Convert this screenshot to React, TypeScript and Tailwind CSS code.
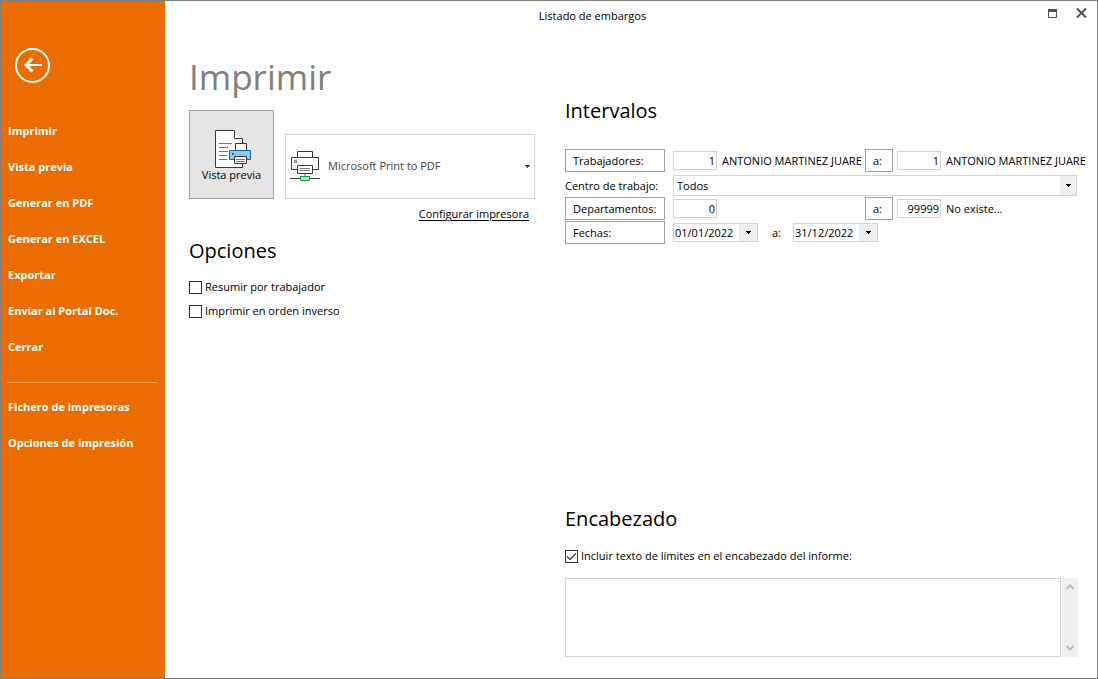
import React, { useState } from 'react';

const mainActions = [
  'Imprimir',
  'Vista previa',
  'Generar en PDF',
  'Generar en EXCEL',
  'Exportar',
  'Enviar al Portal Doc.',
  'Cerrar',
];

const setupActions = ['Fichero de impresoras', 'Opciones de impresión'];

function BackIcon() {
  return (
    <svg width="36" height="36" viewBox="0 0 36 36" fill="none" stroke="white">
      <circle cx="17.5" cy="17.5" r="16.5" strokeWidth="2" />
      <path d="M10.5 17H27" strokeWidth="2" />
      <path d="M17.5 10.5L11 17L17.5 23.5" strokeWidth="3" />
    </svg>
  );
}

function PreviewIcon() {
  return (
    <svg width="38" height="40" viewBox="-1 0 38 40" fill="none">
      <path d="M1.5 1.5H20L28.5 10V38.5H1.5Z" fill="white" stroke="#3a3a3a" />
      <path d="M20.5 1.5V9.5H28.5" fill="white" stroke="#3a3a3a" />
      <path d="M5 14.5H18M5 18.5H14M5 22.5H14M5 26.5H13M5 30.5H13" stroke="#777777" />
      <path d="M21.5 21V14.5H32.5V21" fill="white" stroke="#3a3a3a" />
      <path d="M15.5 21.5H36.5V30.5H15.5Z" fill="#91c8f0" stroke="#1269b3" />
      <path d="M18 24H20V26H18Z" fill="#1269b3" />
      <path d="M20.5 27.5H32.5V34.5H20.5Z" fill="white" stroke="#3a3a3a" />
      <path d="M22 30.5H31M22 32.5H31" stroke="#777777" />
    </svg>
  );
}

function PrinterIcon() {
  return (
    <svg width="31" height="32" viewBox="0 0 31 32" fill="none" className="shrink-0">
      <path d="M7.5 7.5V1.5H22.5V7.5" stroke="#3a3a3a" />
      <path d="M7 19.5H1.5V7.5H28.5V19.5H23" stroke="#3a3a3a" />
      <path d="M4.5 10.5H6.5V12.5H4.5Z" stroke="#777777" />
      <path d="M7.5 15.5H22.5V23.5H7.5Z" fill="white" stroke="#3a3a3a" />
      <path d="M10 18.5H20M10 20.5H20" stroke="#777777" />
      <path d="M15 24V26" stroke="#b0b0b0" strokeWidth="2" />
      <path d="M0 28.5H30" stroke="#3a3a3a" />
      <path d="M10.5 26.5H19.5V30.5H10.5Z" fill="#b9e0c4" stroke="#149845" />
    </svg>
  );
}

function Arrow() {
  return (
    <svg width="5" height="3" viewBox="0 0 5 3" fill="currentColor" shapeRendering="crispEdges">
      <path d="M0 0H5V1H4V2H3V3H2V2H1V1H0Z" />
    </svg>
  );
}

function Check({ label, defaultChecked = false }: { label: string; defaultChecked?: boolean }) {
  const [checked, setChecked] = useState(defaultChecked);
  return (
    <label className="flex h-6 items-center gap-[3px]">
      <span className="relative h-[13px] w-[13px]">
        <input
          type="checkbox"
          checked={checked}
          onChange={(e) => setChecked(e.target.checked)}
          className="block h-[13px] w-[13px] appearance-none border border-[#333333] bg-white"
        />
        {checked && (
          <svg width="13" height="13" viewBox="0 0 13 13" fill="none" className="pointer-events-none absolute inset-0">
            <path d="M2 6.5L5 9.5L11 3.5" stroke="#333333" strokeWidth="1.2" />
          </svg>
        )}
      </span>
      {label}
    </label>
  );
}

function RangeButton({ children, wide = false }: { children: React.ReactNode; wide?: boolean }) {
  return (
    <button className={`h-[23px] shrink-0 border border-[#a0a0a0] bg-white px-[7px] text-left ${wide ? 'w-[100px]' : 'w-7'}`}>
      {children}
    </button>
  );
}

function CodeInput({ label, value }: { label: string; value: string }) {
  return (
    <input
      aria-label={label}
      defaultValue={value}
      className="h-[19px] w-11 shrink-0 border border-[#d4d4d4] bg-white px-px text-right"
    />
  );
}

function DateInput({ label, value }: { label: string; value: string }) {
  return (
    <div className="flex h-[19px] w-[85px] border border-[#d4d4d4]">
      <input aria-label={label} defaultValue={value} className="w-16 min-w-0 flex-1 pl-px" />
      <button aria-label="Abrir calendario" className="flex w-[18px] items-center justify-center bg-[#efefef]">
        <Arrow />
      </button>
    </div>
  );
}

export default function App() {
  return (
    <div className="flex min-h-screen border border-[#7f7f7f] bg-white font-['Open_Sans','Noto_Sans',sans-serif] text-[11px] leading-4 text-black">

      {/* SIDEBAR */}
      <nav className="w-[164px] shrink-0 bg-[#eb6c00] px-[6px] pt-[47px] text-white">
        <button aria-label="Volver" className="ml-2 block">
          <BackIcon />
        </button>
        <ul className="mt-[29px] font-bold">
          {mainActions.map((action) => (
            <li key={action} className="h-9">
              <button className="px-px py-[10px]">{action}</button>
            </li>
          ))}
        </ul>
        <hr className="mt-[17px] mb-[6px] mr-[2px] border-[#f19a4d]" />
        <ul className="font-bold">
          {setupActions.map((action) => (
            <li key={action} className="h-9">
              <button className="px-px py-[10px]">{action}</button>
            </li>
          ))}
        </ul>
      </nav>

      <div className="flex min-w-0 flex-1 flex-col">

        {/* TITLE BAR */}
        <header className="flex h-[30px] items-center pr-[10px]">
          <p className="mr-7 flex-1 text-center">Listado de embargos</p>
          <button aria-label="Maximizar" className="mr-[19px] mb-[6px]">
            <svg width="9" height="9" viewBox="0 0 9 9" fill="none" stroke="#505050">
              <path d="M0.5 0.5H8.5V8.5H0.5Z" />
              <path d="M0 1.5H9" strokeWidth="3" />
            </svg>
          </button>
          <button aria-label="Cerrar ventana" className="mb-[6px]">
            <svg width="11" height="10" viewBox="0 0 11 10" fill="none" stroke="#505050" strokeWidth="2">
              <path d="M1 0.5L10 9.5M10 0.5L1 9.5" />
            </svg>
          </button>
        </header>

        <main className="flex flex-1 gap-[30px] pb-[21px] pl-6 pr-[11px]">

          {/* PRINTER AND OPTIONS */}
          <section className="w-[346px] shrink-0 pt-[22px]">
            <h1 className="text-[35px] leading-[48px] text-[#808080]">Imprimir</h1>
            <div className="mt-[9px] flex items-end gap-[11px]">
              <button className="flex h-[89px] w-[85px] flex-col items-center border border-[#a0a0a0] bg-[#e5e5e5] pt-[18px]">
                <PreviewIcon />
                <span className="-mt-[2px]">Vista previa</span>
              </button>
              <button className="flex h-[65px] flex-1 items-center border border-[#d4d4d4] pl-1 pr-1 pb-px text-left text-[#444444]">
                <PrinterIcon />
                <span className="ml-[7px] flex-1">Microsoft Print to PDF</span>
                <Arrow />
              </button>
            </div>
            <div className="mt-[7px] mr-[6px] text-right">
              <a href="#configurar" className="underline underline-offset-2">Configurar impresora</a>
            </div>

            <h2 className="mt-[15px] mb-[10px] text-[20px] leading-7">Opciones</h2>
            <Check label="Resumir por trabajador" />
            <Check label="Imprimir en orden inverso" />
          </section>

          {/* RANGES AND HEADER TEXT */}
          <div className="flex min-w-0 flex-1 flex-col justify-between pt-[66px]">
            <section>
              <h2 className="mb-6 text-[20px] leading-7">Intervalos</h2>

              <div className="flex h-6 items-center pb-px">
                <RangeButton wide>Trabajadores:</RangeButton>
                <div className="ml-2 flex flex-1 items-center gap-[5px]">
                  <CodeInput label="Trabajador inicial" value="1" />
                  <span className="whitespace-nowrap">ANTONIO MARTINEZ JUARE</span>
                </div>
                <RangeButton>a:</RangeButton>
                <div className="ml-1 flex w-[189px] items-center gap-[5px]">
                  <CodeInput label="Trabajador final" value="1" />
                  <span className="whitespace-nowrap">ANTONIO MARTINEZ JUARE</span>
                </div>
              </div>

              <div className="flex h-6 items-center pt-[2px] pr-[9px] pb-px">
                <label htmlFor="centro" className="w-[108px] shrink-0">Centro de trabajo:</label>
                <div className="relative flex-1">
                  <select id="centro" className="block h-[21px] w-full appearance-none border border-[#d4d4d4] bg-white pl-[3px]">
                    <option>Todos</option>
                  </select>
                  <span className="pointer-events-none absolute inset-y-px right-px flex w-4 items-center justify-center bg-[#efefef]">
                    <Arrow />
                  </span>
                </div>
              </div>

              <div className="flex h-6 items-center pb-px">
                <RangeButton wide>Departamentos:</RangeButton>
                <div className="ml-2 flex flex-1">
                  <CodeInput label="Departamento inicial" value="0" />
                </div>
                <RangeButton>a:</RangeButton>
                <div className="ml-1 flex w-[189px] items-center gap-[5px]">
                  <CodeInput label="Departamento final" value="99999" />
                  <span>No existe...</span>
                </div>
              </div>

              <div className="flex h-6 items-center pb-px">
                <RangeButton wide>Fechas:</RangeButton>
                <div className="ml-2 flex items-center">
                  <DateInput label="Fecha inicial" value="01/01/2022" />
                  <span className="w-[35px] pl-[14px]">a:</span>
                  <DateInput label="Fecha final" value="31/12/2022" />
                </div>
              </div>
            </section>

            <section className="pr-2">
              <h2 className="mb-[11px] text-[20px] leading-7">Encabezado</h2>
              <Check label="Incluir texto de límites en el encabezado del informe:" defaultChecked />
              <div className="mt-[10px] flex gap-px">
                <textarea aria-label="Texto del encabezado" className="block h-[79px] flex-1 resize-none border border-[#d4d4d4] p-1" />
                <div className="flex w-4 flex-col items-center justify-between bg-[#efefef] py-[6px]">
                  <button aria-label="Subir">
                    <svg width="8" height="6" viewBox="0 0 8 6" fill="none" stroke="#bcbcbc" strokeWidth="2">
                      <path d="M0.5 5L4 1.5L7.5 5" />
                    </svg>
                  </button>
                  <button aria-label="Bajar">
                    <svg width="8" height="6" viewBox="0 0 8 6" fill="none" stroke="#bcbcbc" strokeWidth="2">
                      <path d="M0.5 1L4 4.5L7.5 1" />
                    </svg>
                  </button>
                </div>
              </div>
            </section>
          </div>
        </main>
      </div>
    </div>
  );
}
